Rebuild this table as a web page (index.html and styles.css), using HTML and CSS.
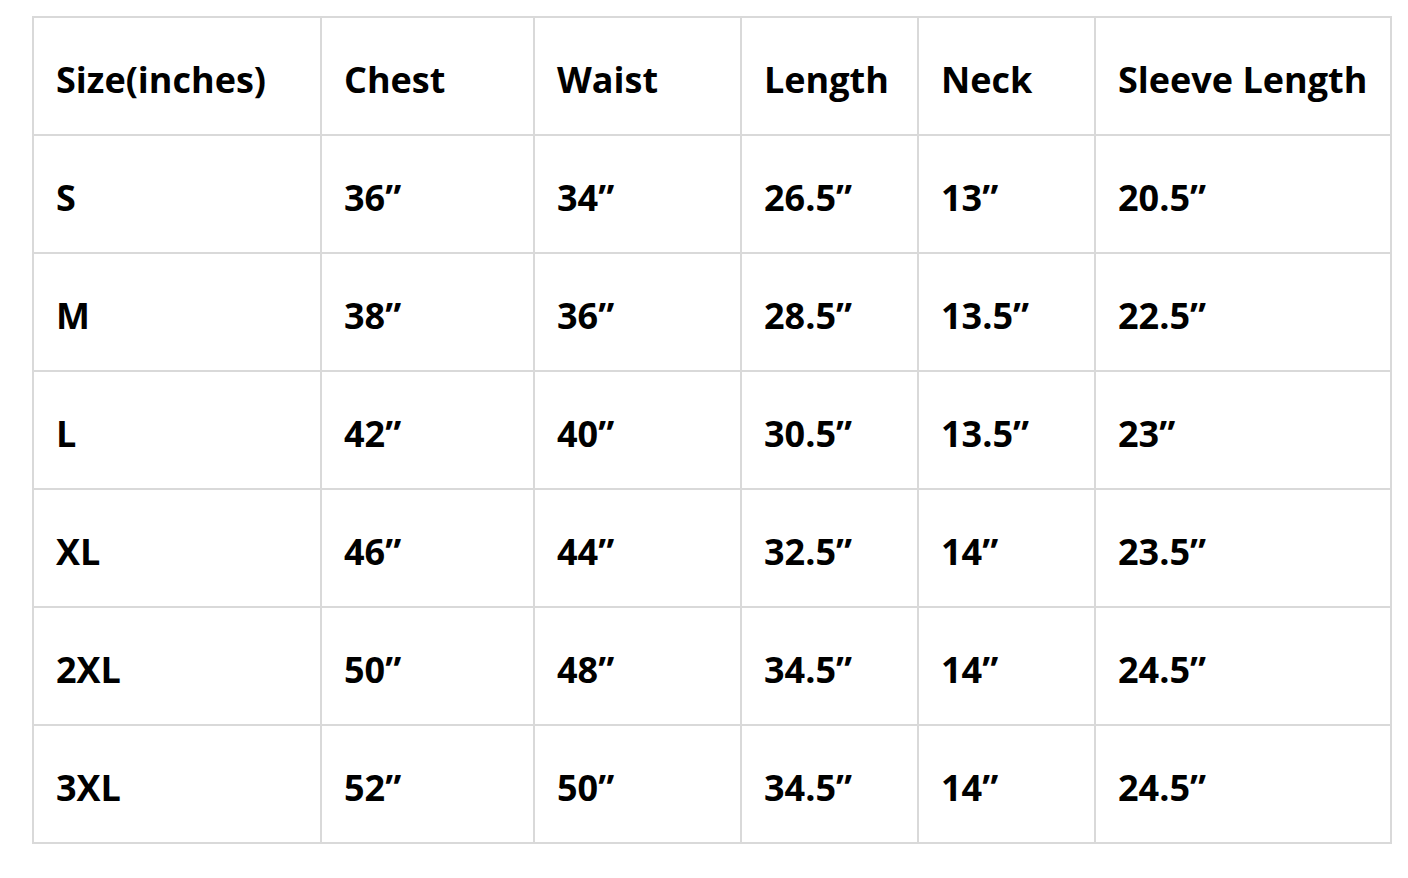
FILE: index.html
```html
<!DOCTYPE html>
<html>
<head>
<meta charset="utf-8">
<link rel="stylesheet" href="styles.css">
</head>
<body>
<table class="size-table">
  <colgroup>
    <col class="c1"><col class="c2"><col class="c3"><col class="c4"><col class="c5"><col class="c6">
  </colgroup>
  <tr><td>Size(inches)</td><td>Chest</td><td>Waist</td><td>Length</td><td>Neck</td><td>Sleeve Length</td></tr>
  <tr><td>S</td><td>36”</td><td>34”</td><td>26.5”</td><td>13”</td><td>20.5”</td></tr>
  <tr><td>M</td><td>38”</td><td>36”</td><td>28.5”</td><td>13.5”</td><td>22.5”</td></tr>
  <tr><td>L</td><td>42”</td><td>40”</td><td>30.5”</td><td>13.5”</td><td>23”</td></tr>
  <tr><td>XL</td><td>46”</td><td>44”</td><td>32.5”</td><td>14”</td><td>23.5”</td></tr>
  <tr><td>2XL</td><td>50”</td><td>48”</td><td>34.5”</td><td>14”</td><td>24.5”</td></tr>
  <tr><td>3XL</td><td>52”</td><td>50”</td><td>34.5”</td><td>14”</td><td>24.5”</td></tr>
</table>
</body>
</html>
```
FILE: styles.css
```css
html, body {
  margin: 0;
  padding: 0;
  background: #ffffff;
}
body {
  padding: 16px 0 0 32px;
}
.size-table {
  border-collapse: collapse;
  table-layout: fixed;
  width: 1358px;
  font-family: "Open Sans", "Liberation Sans", sans-serif;
  font-weight: 700;
  font-size: 36px;
  color: #000;
}
.c1 { width: 288px; }
.c2 { width: 213px; }
.c3 { width: 207px; }
.c4 { width: 177px; }
.c5 { width: 177px; }
.c6 { width: 296px; }
.size-table td {
  border: 2px solid #d9d9d9;
  height: 118px;
  padding: 6px 0 0 22px;
  box-sizing: border-box;
  vertical-align: middle;
  white-space: nowrap;
}
```
